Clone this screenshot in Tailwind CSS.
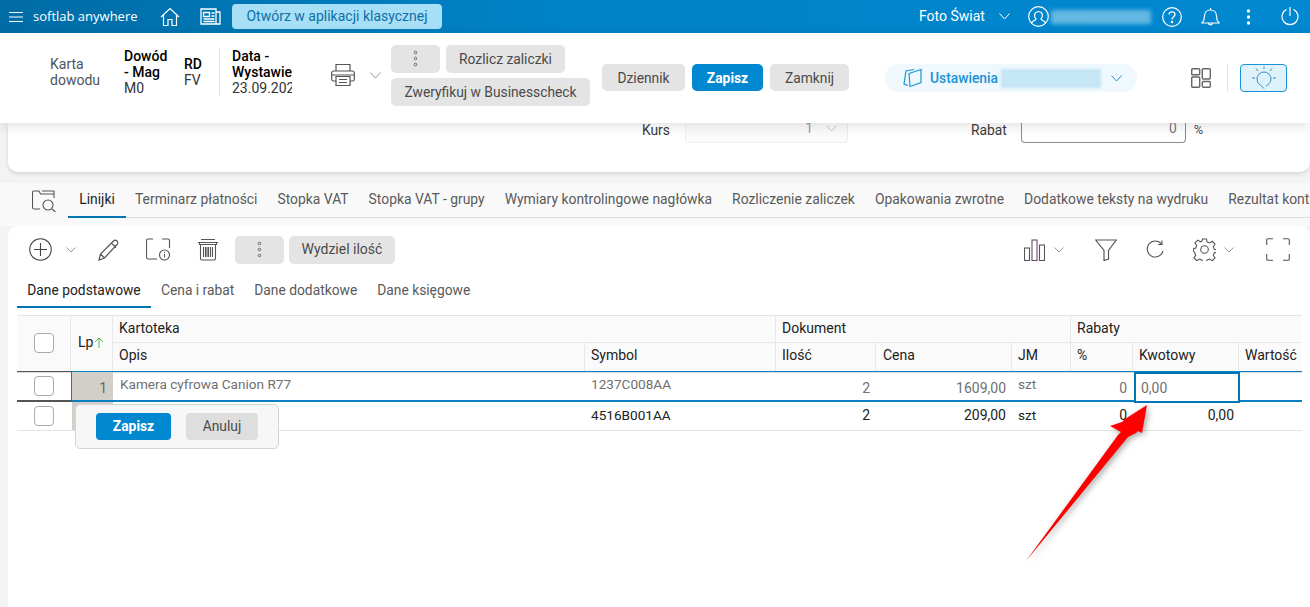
<!DOCTYPE html>
<html lang="pl">
<head>
  <meta charset="UTF-8">
  <title>Karta dowodu</title>
  <script src="https://cdn.jsdelivr.net/npm/@tailwindcss/browser@4"></script>
</head>
<body class="relative w-[1310px] h-[607px] overflow-hidden bg-[#f3f3f3] font-['Roboto',sans-serif] text-[13.8px] text-[#3a3a3a]">

  <!-- pasek gorny -->
  <header class="h-[33px] flex items-center text-white bg-gradient-to-r from-[#006ca5] via-[#0082c6] via-40% to-[#0088d1]">
    <svg class="ml-[9px] w-[14px] h-[14px]" viewBox="0 0 14 14" fill="none" stroke="white" stroke-width="1"><path d="M0 2.500h14M0 7h14M0 11.500h14"/></svg>
    <span class="ml-[10px] w-[110px] text-[13px] font-['Open_Sans',sans-serif]">softlab anywhere</span>
    <svg class="ml-[17px] w-[20px] h-[20px]" viewBox="0 0 20 20" fill="none" stroke="white" stroke-width="1.2"><path d="M1 10 10 1.500 19 10M3.500 8v10.500h4.500v-6h4v6h4.500V8"/></svg>
    <svg class="ml-[20px] w-[21px] h-[17px]" viewBox="0 0 21 17" fill="none" stroke="white" stroke-width="1.3"><path d="M1 1h15v15H1zM16 4h4v12h-4M3.500 4.500h6v4h-6zM11.500 5h3M11.500 8h3M3.500 11h11M3.500 13.500h11"/></svg>
    <button class="ml-[11px] w-[210px] h-[25px] rounded-[4px] bg-[#a7dff6] text-[#0d6fa8] text-[14px]">Otwórz w aplikacji klasycznej</button>
    <span class="ml-[477px] text-[14px]">Foto Świat</span>
    <svg class="ml-[14px] w-[11px] h-[7px]" viewBox="0 0 11 7" fill="none" stroke="white"><path d="M.5.5 5.500 6 10.500.5"/></svg>
    <svg class="ml-[18px] w-[21px] h-[21px]" viewBox="0 0 21 21" fill="none" stroke="white" stroke-width="1.2"><circle cx="10.500" cy="10.500" r="9.800"/><path d="M3.500 17c1-2.500 4-2.500 4.500-4-2-2-2.500-7 2.500-7.500 5 .5 4.500 5.500 2.500 7.500.5 1.500 3.500 1.500 4.500 4"/></svg>
    <div class="ml-[2px] w-[100px] h-[14px] bg-[#8fcdec]/70 blur-[2px]"></div>
    <svg class="ml-[11px] w-[20px] h-[20px]" viewBox="0 0 20 20" fill="none" stroke="white" stroke-width="1.2"><circle cx="10" cy="10" r="9.300"/><path d="M7 7.500C7 5.500 8.500 4.800 10 4.800s3 1 3 2.700c0 2.300-3 2.300-3 5"/><circle cx="10" cy="15" r=".7" fill="white"/></svg>
    <svg class="ml-[19px] w-[19px] h-[20px]" viewBox="0 0 19 20" fill="none" stroke="white" stroke-width="1.2"><path d="M1 16c2-2 2.500-4 2.500-7 0-3.500 2.500-6 6-6s6 2.500 6 6c0 3 .5 5 2.500 7zM9.500 3V1M7.500 16c0 2.500 4 2.500 4 0"/></svg>
    <svg class="ml-[26px] w-[5px] h-[16px]" viewBox="0 0 5 16" fill="white"><circle cx="2.500" cy="2" r="1.700"/><circle cx="2.500" cy="8" r="1.700"/><circle cx="2.500" cy="14" r="1.700"/></svg>
    <svg class="ml-[30px] w-[18px] h-[19px]" viewBox="0 0 18 19" fill="none" stroke="white" stroke-width="1.200"><path d="M9 0v9M5.500 2.500a8 8 0 1 0 7 0"/></svg>
  </header>

  <!-- naglowek dokumentu -->
  <div class="relative z-10 h-[90px] bg-white flex items-center shadow-[0_3px_12px_rgba(0,0,0,0.12)] leading-[16px]">
    <div class="ml-[50px] -mt-[12px] w-[74px] text-[#4a5560] text-[14px]">Karta<br>dowodu</div>
    <div class="-mt-[12px] w-[60px] text-black text-[14px]"><span class="font-medium">Dowód<br>- Mag</span><br><span class="text-[#333]">M0</span></div>
    <div class="-mt-[12px] w-[36px] text-black border-r border-[#e4e4e4] h-[48px] flex flex-col justify-center text-[14px]"><span class="font-medium">RD</span><span class="text-[#333]">FV</span></div>
    <div class="-mt-[12px] ml-[12px] w-[60px] overflow-hidden whitespace-nowrap text-black text-[14px]"><span class="font-medium">Data -<br>Wystawienia</span><br><span class="text-[#333]">23.09.2024</span></div>
    <svg class="-mt-[6px] ml-[39px] w-[24px] h-[24px]" viewBox="0 0 24 24" fill="none" stroke="#555" stroke-width="1.200"><path d="M5 8V1.500h14V8M5 18H2.500A1.800 1.800 0 0 1 .7 16V10a2 2 0 0 1 2-2h18.600a2 2 0 0 1 2 2v6a1.800 1.800 0 0 1-1.800 2H19"/><path d="M.7 12h22.600M5 13.500h14v9H5zM8 16.500h8M8 19.500h8"/></svg>
    <svg class="-mt-[6px] ml-[15px] w-[11px] h-[7px]" viewBox="0 0 11 7" fill="none" stroke="#999"><path d="M.5.5 5.500 6 10.500.5"/></svg>
    <div class="-mt-[6px] ml-[10px] w-[199px] flex flex-wrap gap-x-[6px] gap-y-[5px]">
      <button class="w-[49px] h-[28px] rounded-[5px] bg-[#e4e4e4] flex items-center justify-center">
        <svg class="w-[5px] h-[17px]" viewBox="0 0 5 17" fill="none" stroke="#666"><circle cx="2.500" cy="2.500" r="1.300"/><circle cx="2.500" cy="8.500" r="1.300"/><circle cx="2.500" cy="14.500" r="1.300"/></svg>
      </button>
      <button class="w-[119px] h-[28px] rounded-[5px] bg-[#e4e4e4] text-[#4a4a4a]">Rozlicz zaliczki</button>
      <button class="w-[199px] h-[28px] rounded-[5px] bg-[#e4e4e4] text-[#4a4a4a]">Zweryfikuj w Businesscheck</button>
    </div>
    <button class="-mt-[1px] ml-[12px] w-[83px] h-[27px] rounded-[5px] bg-[#e4e4e4] text-[#4a4a4a]">Dziennik</button>
    <button class="-mt-[1px] ml-[7px] w-[71px] h-[27px] rounded-[5px] bg-[#0088d1] text-white font-bold">Zapisz</button>
    <button class="-mt-[1px] ml-[7px] w-[79px] h-[27px] rounded-[5px] bg-[#e4e4e4] text-[#4a4a4a]">Zamknij</button>
    <div class="ml-[36px] w-[252px] h-[28px] rounded-full bg-[#eff8fd] flex items-center text-[#1a93d6] font-medium">
      <svg class="ml-[18px] w-[19px] h-[20px]" viewBox="0 0 19 20" fill="none" stroke="#1a93d6" stroke-width="1.200"><path d="M6 5.500 18 1.500v13L7 18.500zM11 1.500 3 3 1 16l4 1.500"/></svg>
      <span class="ml-[8px]">Ustawienia</span>
      <div class="ml-[3px] w-[100px] h-[19px] bg-[#c5e6f4] blur-[1px]"></div>
      <svg class="ml-[10px] w-[11px] h-[7px]" viewBox="0 0 11 7" fill="none" stroke="#1a93d6"><path d="M.5.5 5.500 6 10.500.5"/></svg>
    </div>
    <svg class="ml-[54px] w-[20px] h-[20px]" viewBox="0 0 20 20" fill="none" stroke="#666" stroke-width="1.400"><rect x=".7" y=".7" width="8" height="6" rx="1"/><rect x=".7" y="9" width="8" height="10.300" rx="1"/><rect x="11.300" y=".7" width="8" height="10.300" rx="1"/><rect x="11.300" y="13.500" width="8" height="5.800" rx="1"/></svg>
    <div class="ml-[16px] w-px h-[28px] bg-[#e4e4e4]"></div>
    <button class="ml-[12px] w-[47px] h-[28px] rounded-[4px] border border-[#1a93d6] bg-[#def2fb] flex items-center justify-center">
      <svg class="w-[26px] h-[24px]" viewBox="0 0 26 24" fill="none" stroke="#3f8db8"><path d="M13 22.500c-.5-2-7-3.500-7-9.500a7 7 0 0 1 14 0c0 3.500-2.500 5.500-5 7M13 .5V3M5 2.500l2 2.500M21 2.500l-2 2.500M1 12h3M22 12h3"/></svg>
    </button>
  </div>

  <!-- karta naglowka (przewinieta) -->
  <div class="mx-2 w-[1302px] h-[49px] rounded-b-[10px] bg-white shadow-[0_2px_4px_rgba(0,0,0,0.12)] flex leading-[14px]">
    <span class="ml-[634px]">Kurs</span>
    <div class="ml-[15px] w-[163px] h-[20px] rounded-b-[4px] border border-t-0 border-[#eeeeee] bg-[#fbfbfb] flex justify-end pr-[10px] text-[#999] leading-[10px]">1<svg class="ml-[13px] mt-[2px] w-[11px] h-[7px]" viewBox="0 0 11 7" fill="none" stroke="#ccc"><path d="M.5.5 5.500 6 10.500.5"/></svg></div>
    <span class="ml-[123px]">Rabat</span>
    <div class="ml-[14px] w-[165px] h-[20px] rounded-b-[4px] border border-t-0 border-[#8a8a8a] bg-white flex justify-end pr-[8px] text-[#777] leading-[10px]">0</div>
    <span class="ml-[8px] text-[13px] text-[#555]">%</span>
  </div>

  <!-- zakladki dokumentu -->
  <div class="mt-[11px] h-[43px] bg-[#f9f9f9] flex items-start overflow-hidden whitespace-nowrap">
    <svg class="shrink-0 ml-[32px] mt-[7px] w-[25px] h-[22px]" viewBox="0 0 25 22" fill="none" stroke="#555" stroke-width="1.100"><path d="M8 19H2a1.500 1.500 0 0 1-1.500-1.500v-15A1.500 1.500 0 0 1 2 1h5l1.500 3H22M10 1h12v7"/><circle cx="16" cy="15" r="5"/><path d="m20 19 3.500 3"/></svg>
    <nav class="shrink-0 ml-[11px] w-[1300px] h-[35px] flex items-stretch border-b border-[#dcdcdc] text-[#5a5a5a] text-[13.88px]">
      <a class="w-[58px] text-center text-[#222] border-b-2 border-[#0076b4] h-[35px] leading-[32px]">Linijki</a>
      <a class="ml-[9px] leading-[32px]">Terminarz płatności</a>
      <a class="ml-[20px] leading-[32px]">Stopka VAT</a>
      <a class="ml-[20px] leading-[32px]">Stopka VAT - grupy</a>
      <a class="ml-[20px] leading-[32px]">Wymiary kontrolingowe nagłówka</a>
      <a class="ml-[20px] leading-[32px]">Rozliczenie zaliczek</a>
      <a class="ml-[20px] leading-[32px]">Opakowania zwrotne</a>
      <a class="ml-[20px] leading-[32px]">Dodatkowe teksty na wydruku</a>
      <a class="ml-[20px] leading-[32px]">Rezultat kontroli</a>
    </nav>
  </div>

  <!-- karta linii -->
  <div class="ml-2 w-[1302px] h-[400px] rounded-t-[10px] bg-white">
    <div class="h-[47px] flex items-center">
      <svg class="ml-[21px] w-[23px] h-[23px]" viewBox="0 0 23 23" fill="none" stroke="#444" stroke-width="1.100"><circle cx="11.500" cy="11.500" r="10.800"/><path d="M11.500 5v13M5 11.500h13"/></svg>
      <svg class="ml-[14px] w-[10px] h-[6px]" viewBox="0 0 10 6" fill="none" stroke="#999"><path d="M.5.5 5 5 9.500.5"/></svg>
      <svg class="ml-[22px] w-[22px] h-[22px]" viewBox="0 0 22 22" fill="none" stroke="#555" stroke-width="1.200"><path d="M1 21l1.500-6L15.500 2c1-1 2.500-1 3.500 0s1 2.500 0 3.500L6.500 19zM13.500 4l4.500 4.500M2.500 15l4 4"/></svg>
      <svg class="ml-[26px] w-[25px] h-[23px]" viewBox="0 0 25 23" fill="none" stroke="#555" stroke-width="1.100"><path d="M11 21H2a1.500 1.500 0 0 1-1.500-1.500v-17A1.500 1.500 0 0 1 2 1h5M16 1h6a1.500 1.500 0 0 1 1.500 1.500V10"/><circle cx="18.500" cy="17" r="5"/><path d="M18.500 16v3.500M18.500 14v1"/></svg>
      <svg class="ml-[26px] w-[22px] h-[23px]" viewBox="0 0 22 23" fill="none" stroke="#555" stroke-width="1.100"><path d="M1 4.500h20M4 1.500h14M2.500 4.500v2h17v-2M3.500 6.500v14a1.500 1.500 0 0 0 1.500 1.500h12a1.500 1.500 0 0 0 1.500-1.500v-14M6.500 9v10M8.500 9v10M10 9v10M11.500 9v10M13.500 9v10M15.500 9v10"/></svg>
      <button class="ml-[16px] w-[49px] h-[28px] rounded-[5px] bg-[#e4e4e4] flex items-center justify-center">
        <svg class="w-[5px] h-[17px]" viewBox="0 0 5 17" fill="none" stroke="#666"><circle cx="2.500" cy="2.500" r="1.300"/><circle cx="2.500" cy="8.500" r="1.300"/><circle cx="2.500" cy="14.500" r="1.300"/></svg>
      </button>
      <button class="ml-[5px] w-[106px] h-[28px] rounded-[5px] bg-[#e4e4e4] text-[#4a4a4a] text-[14px]">Wydziel ilość</button>
      <svg class="ml-[629px] w-[21px] h-[22px]" viewBox="0 0 21 22" fill="none" stroke="#555" stroke-width="1.100"><rect x=".5" y="9" width="5" height="12.500"/><rect x="8" y="1" width="5" height="20.500" stroke="#6a4a6a"/><rect x="15.500" y="6" width="5" height="15.500"/></svg>
      <svg class="ml-[9px] w-[10px] h-[6px]" viewBox="0 0 10 6" fill="none" stroke="#999"><path d="M.5.5 5 5 9.500.5"/></svg>
      <svg class="ml-[31px] w-[22px] h-[22px]" viewBox="0 0 22 22" fill="none" stroke="#555" stroke-width="1.200"><path d="M.7 1h20.600L13.500 11.500V20L9 21.500v-10z"/></svg>
      <svg class="ml-[29px] w-[18px] h-[19px]" viewBox="0 0 18 19" fill="none" stroke="#555" stroke-width="1.100"><path d="M15.500 4A8 8 0 1 0 17 11M16 .5V4.500H12"/></svg>
      <svg class="ml-[29px] w-[23px] h-[23px]" viewBox="0 0 23 23" fill="none" stroke="#555" stroke-width="1.100"><circle cx="11.500" cy="11.500" r="3.800"/><path d="M9.500 1h4l.6 3 2.500 1 2.600-1.700 2.800 2.800-1.700 2.600 1 2.500 2.200.6v2.400l-2.200.6-1 2.500 1.700 2.600-2.800 2.800-2.600-1.700-2.500 1-.6 2h-4l-.6-2-2.500-1-2.600 1.700-2.800-2.800 1.700-2.600-1-2.500L.5 13v-2.400l2.200-.6 1-2.500L2 4.900 4.800 2.100l2.600 1.700 1.500-.8z"/></svg>
      <svg class="ml-[8px] w-[10px] h-[6px]" viewBox="0 0 10 6" fill="none" stroke="#999"><path d="M.5.5 5 5 9.500.5"/></svg>
      <svg class="ml-[32px] w-[24px] h-[23px]" viewBox="0 0 24 23" fill="none" stroke="#555" stroke-width="1.100"><path d="M7 .7H2A1.300 1.300 0 0 0 .7 2v5M17 .7h5A1.300 1.300 0 0 1 23.300 2v5M7 22.300H2A1.300 1.300 0 0 1 .7 21v-5M17 22.300h5a1.300 1.300 0 0 0 1.300-1.300v-5"/></svg>
    </div>

    <!-- podzakladki -->
    <div class="ml-[9px] h-[35px] flex items-stretch text-[#5a5a5a]">
      <a class="w-[134px] text-center text-[#222] border-b-2 border-[#0076b4] leading-[34px]">Dane podstawowe</a>
      <a class="ml-[10px] leading-[34px]">Cena i rabat</a>
      <a class="ml-[20px] leading-[34px]">Dane dodatkowe</a>
      <a class="ml-[20px] leading-[34px]">Dane księgowe</a>
    </div>

    <!-- tabela -->
    <div class="relative ml-[9px] mt-[7px] w-[1285px]">
      <div class="grid grid-cols-[54px_42px_472px_191px_100px_136px_59px_62px_106px_63px] grid-rows-[27px_28px] bg-[#fafafa] border-t border-[#e4e4e4] text-[#222] border-b-2 border-b-[#dcdcdc] text-[14px]">
        <div class="row-span-2 border-r border-[#e8e8e8] flex items-center justify-center pb-[2px]">
          <span class="w-[20px] h-[20px] rounded-[4px] border border-[#a9a9a9] bg-white"></span>
        </div>
        <div class="row-span-2 border-r border-[#e8e8e8] flex items-center pl-[7px] pb-[2px]">Lp
          <svg class="ml-px w-[10px] h-[11px]" viewBox="0 0 10 11" fill="none" stroke="#5cb85c"><path d="M5 11V1M1 5l4-4 4 4"/></svg>
        </div>
        <div class="col-span-2 pl-[6px] leading-[24px] border-r border-b border-[#e8e8e8]">Kartoteka</div>
        <div class="col-span-3 pl-[6px] leading-[24px] border-r border-b border-[#e8e8e8]">Dokument</div>
        <div class="col-span-3 pl-[6px] leading-[24px] border-b border-[#e8e8e8]">Rabaty</div>
        <div class="pl-[6px] leading-[25px] border-r border-[#e8e8e8]">Opis</div>
        <div class="pl-[6px] leading-[25px] border-r border-[#e8e8e8]">Symbol</div>
        <div class="pl-[6px] leading-[25px] border-r border-[#e8e8e8]">Ilość</div>
        <div class="pl-[7px] leading-[25px] border-r border-[#e8e8e8]">Cena</div>
        <div class="pl-[6px] leading-[25px] border-r border-[#e8e8e8]">JM</div>
        <div class="pl-[6px] leading-[25px] border-r border-[#e8e8e8]">%</div>
        <div class="pl-[6px] leading-[25px] border-r border-[#e8e8e8]">Kwotowy</div>
        <div class="pl-[6px] leading-[25px]">Wartość</div>
      </div>
      <div class="-mt-[2px] flex h-px"><div class="w-[55px] bg-[#555]"></div><div class="flex-1 bg-[#0a80c4]"></div></div>

      <!-- wiersz w edycji -->
      <div class="grid grid-cols-[54px_42px_472px_191px_100px_136px_59px_62px_106px_63px] h-[28px] text-[#707070] text-[13.6px] relative">
        <div class="flex items-center justify-center"><span class="w-[20px] h-[20px] rounded-[4px] border border-[#a9a9a9] bg-white"></span></div>
        <div class="bg-[#d2cec8] border-l border-[#0a80c4] text-right pr-[6px] pt-[6px] text-[#666] text-[14px]">1</div>
        <div class="pl-[7px] pt-[2px]">Kamera cyfrowa Canion R77</div>
        <div class="pl-[6px] pt-[2px]">1237C008AA</div>
        <div class="text-right pr-[6px] pt-[6px] text-[14px]">2</div>
        <div class="text-right pr-[6px] pt-[6px] text-[14px]">1609,00</div>
        <div class="pl-[6px] pt-[2px]">szt</div>
        <div class="text-right pr-[6px] pt-[6px] text-[14px]">0</div>
        <div class="relative z-[1]"><div class="absolute left-[1px] top-0 w-[106px] h-[31px] border-[2px] border-[#0076b4] pl-[5px] pt-[4px] bg-white text-[14px]">0,00</div></div>
        <div></div>
      </div>
      <div class="flex h-[2px]"><div class="w-[55px] bg-[#555]"></div><div class="flex-1 bg-[#0a80c4]"></div></div>

      <!-- wiersz -->
      <div class="grid grid-cols-[54px_42px_472px_191px_100px_136px_59px_62px_106px_63px] h-[29px] border-b border-[#e4e4e4] text-[#222] text-[13.6px] leading-[27px]">
        <div class="flex items-center justify-center"><span class="w-[20px] h-[20px] rounded-[4px] border border-[#a9a9a9] bg-white"></span></div>
        <div class="bg-[#d2cec8] ml-px"></div>
        <div class="pl-[7px]">Aparat cyfrowy Canion R8</div>
        <div class="pl-[6px]">4516B001AA</div>
        <div class="text-right pr-[6px] text-[14px]">2</div>
        <div class="text-right pr-[6px] text-[14px]">209,00</div>
        <div class="pl-[6px]">szt</div>
        <div class="text-right pr-[6px] text-[14px]">0</div>
        <div class="text-right pr-[5px] text-[14px]">0,00</div>
        <div></div>
      </div>

      <!-- przyciski edycji wiersza -->
      <div class="absolute left-[58px] top-[89px] w-[204px] h-[45px] rounded-[5px] border border-[#d4d4d4] bg-[#f7f7f7] flex items-center pl-[20px] gap-[15px]">
        <button class="w-[75px] h-[27px] rounded-[4px] bg-[#0088d1] text-white font-bold">Zapisz</button>
        <button class="w-[72px] h-[27px] rounded-[4px] bg-[#dedede] text-[#4a4a4a]">Anuluj</button>
      </div>
    </div>
  </div>

  <!-- czerwona strzalka na zrzucie -->
  <svg class="absolute left-0 top-0 w-[1310px] h-[607px] pointer-events-none" viewBox="0 0 1310 607">
    <polygon class="fill-[#ff0000] drop-shadow-[2px_2px_3px_rgba(0,0,0,0.35)]" points="1147,405 1142,433 1138,431 1136,433 1128,437 1026,561 1118,435 1121,432 1110,426 1122,422 1125,419"/>
  </svg>
</body>
</html>
